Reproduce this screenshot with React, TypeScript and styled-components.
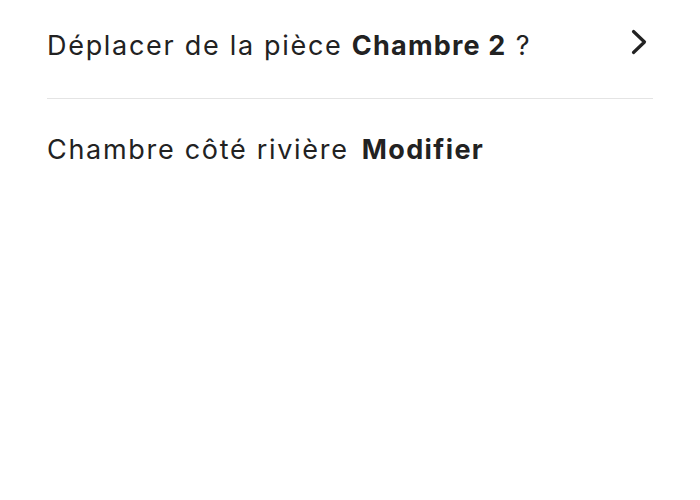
import React from "react";
import styled, { createGlobalStyle } from "styled-components";

const Global = createGlobalStyle`
  html, body { margin: 0; padding: 0; background: #fff; }
  body { font-family: Inter, "Noto Sans", sans-serif; color: #222222; }
`;

const Page = styled.div`
  width: 700px;
  height: 500px;
  box-sizing: border-box;
  padding: 0 47px;
  display: flex;
  flex-direction: column;
`;

const Row = styled.div`
  display: flex;
  align-items: center;
  justify-content: space-between;
  height: 99px;
  padding-bottom: 7px;
  border-bottom: 1.5px solid #e4e4e4;
  box-sizing: border-box;
`;

const Text = styled.span`
  font-size: 27px;
  font-weight: 400;
  letter-spacing: 1.7px;
  white-space: pre;
`;

const Bold = styled.b`
  font-weight: 700;
  letter-spacing: 1.2px;
`;

const Chevron = styled.svg`
  width: 16px;
  height: 26px;
  margin-right: 6px;
  margin-top: -8px;
`;

const EditRow = styled.div`
  display: flex;
  align-items: center;
  height: 100px;
`;

const Edit = styled.button`
  border: none;
  background: none;
  padding: 0;
  margin-left: 13px;
  font: inherit;
  font-size: 27px;
  font-weight: 700;
  letter-spacing: 1.4px;
  color: #222222;
`;

export default function App() {
  return (
    <>
      <Global />
      <Page>
        <Row>
          <Text>
            Déplacer de la pièce <Bold>Chambre 2</Bold> ?
          </Text>
          <Chevron viewBox="0 0 16 26" fill="none">
            <path d="M2.5 2.5 L13.5 13 L2.5 23.5" stroke="#222" strokeWidth="3.2" strokeLinecap="round" strokeLinejoin="round" />
          </Chevron>
        </Row>
        <EditRow>
          <Text>Chambre côté rivière</Text>
          <Edit>Modifier</Edit>
        </EditRow>
      </Page>
    </>
  );
}
